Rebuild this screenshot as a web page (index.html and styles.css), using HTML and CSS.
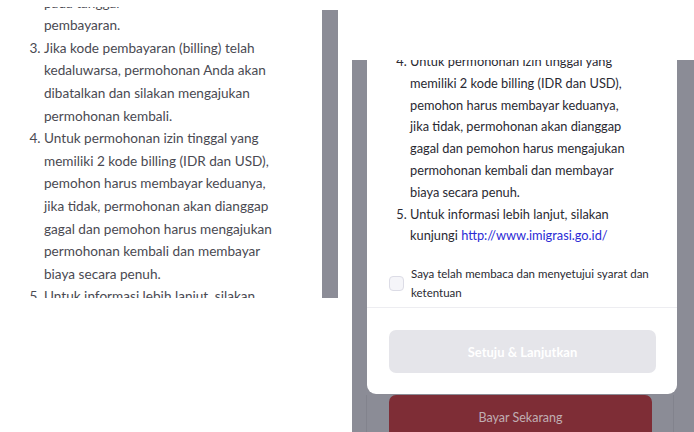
FILE: index.html
```html
<!DOCTYPE html>
<html lang="id">
<head>
  <meta charset="UTF-8">
  <meta name="viewport" content="width=device-width, initial-scale=1.0">
  <title>Syarat Pembayaran</title>
  <link rel="stylesheet" href="styles.css">
</head>
<body>

  <!-- Terms page (scrolled) -->
  <div class="doc">
    <ol class="terms" start="2">
      <li>Pastikan membayar sesuai nominal<br>pada tanggal<br>pembayaran.</li>
      <li>Jika kode pembayaran (billing) telah<br>kedaluwarsa, permohonan Anda akan<br>dibatalkan dan silakan mengajukan<br>permohonan kembali.</li>
      <li>Untuk permohonan izin tinggal yang<br>memiliki 2 kode billing (IDR dan USD),<br>pemohon harus membayar keduanya,<br>jika tidak, permohonan akan dianggap<br>gagal dan pemohon harus mengajukan<br>permohonan kembali dan membayar<br>biaya secara penuh.</li>
      <li>Untuk informasi lebih lanjut, silakan<br>kunjungi <a href="http://www.imigrasi.go.id/">http://www.imigrasi.go.id/</a></li>
    </ol>
  </div>
  <div class="scrollbar"></div>

  <!-- Phone view with modal -->
  <div class="phone">
    <div class="modal">
      <ol class="terms terms-sm" start="4">
        <li>Untuk permohonan izin tinggal yang<br>memiliki 2 kode billing (IDR dan USD),<br>pemohon harus membayar keduanya,<br>jika tidak, permohonan akan dianggap<br>gagal dan pemohon harus mengajukan<br>permohonan kembali dan membayar<br>biaya secara penuh.</li>
        <li>Untuk informasi lebih lanjut, silakan<br>kunjungi <a href="http://www.imigrasi.go.id/">http://www.imigrasi.go.id/</a></li>
      </ol>

      <label class="agree">
        <span class="checkbox"></span>
        <span>Saya telah membaca dan menyetujui syarat dan<br>ketentuan</span>
      </label>

      <div class="modal-footer">
        <button class="btn-agree" disabled>Setuju &amp; Lanjutkan</button>
      </div>
    </div>

    <div class="bottom-bar">
      <button class="btn-pay">Bayar Sekarang</button>
    </div>
  </div>

</body>
</html>
```

FILE: styles.css
```css
/* Global */
body {
  margin: 0;
  background-color: #fff;
  font-family: Lato, 'Noto Sans', sans-serif;
  display: flex;
  align-items: flex-start;
  height: 432px;
  overflow: hidden;
}

/* Left: terms page */
.doc {
  width: 322px;
  height: 298px;
  overflow: hidden;
  position: relative;
}

/* white header strip covering the scrolled text */
.doc::before {
  content: "";
  position: absolute;
  top: 0;
  left: 0;
  right: 0;
  height: 7px;
  background-color: #fff;
  z-index: 1;
}

.terms {
  margin: -31px 0 0;
  padding-left: 44px;
  font-size: 13.6px;
  line-height: 22.6px;
  color: #4a4a52;
}

.terms a {
  color: #2b2bd6;
  text-decoration: none;
}

.scrollbar {
  width: 16px;
  height: 288px;
  margin-top: 10px;
  background-color: #8b8c96;
}

/* Right: phone view */
.phone {
  width: 342px;
  height: 372px;
  margin: 60px 0 0 14px;
  background-color: #8b8c96;
  overflow: hidden;
}

.modal {
  width: 310px;
  margin-left: 15px;
  background-color: #fff;
  border-radius: 0 0 9px 9px;
  position: relative;
  z-index: 1;
}

.terms-sm {
  margin: -9px 0 0;
  padding: 0 10px 0 43px;
  font-size: 12.8px;
  line-height: 21.8px;
  color: #2a2a32;
}

.agree {
  display: flex;
  align-items: center;
  gap: 7px;
  padding: 17px 10px 5px 22px;
  font-size: 11.5px;
  line-height: 19px;
  color: #2a2a32;
}

.checkbox {
  width: 13px;
  height: 13px;
  flex-shrink: 0;
  border: 1px solid #dcdce6;
  border-radius: 4px;
  background-color: #f5f5f9;
}

.modal-footer {
  border-top: 1px solid #ededf1;
  padding: 22px 21px 21px 22px;
}

.btn-agree {
  display: block;
  width: 100%;
  height: 43px;
  border: none;
  border-radius: 7px;
  background-color: #e5e5ea;
  color: #fff;
  font-family: inherit;
  font-size: 13px;
  font-weight: 700;
}

/* Page bottom bar under the overlay */
.bottom-bar {
  width: 308px;
  height: 60px;
  margin-left: 14px;
  border-left: 1px solid #82838d;
  border-right: 1px solid #82838d;
  padding-left: 22px;
  box-sizing: border-box;
  margin-top: 1px;
}

.btn-pay {
  display: block;
  width: 263px;
  height: 50px;
  border: none;
  border-radius: 7px;
  background-color: #7e2d36;
  color: #c0aeb3;
  font-family: inherit;
  font-size: 12.5px;
  padding-bottom: 7px;
}
```
